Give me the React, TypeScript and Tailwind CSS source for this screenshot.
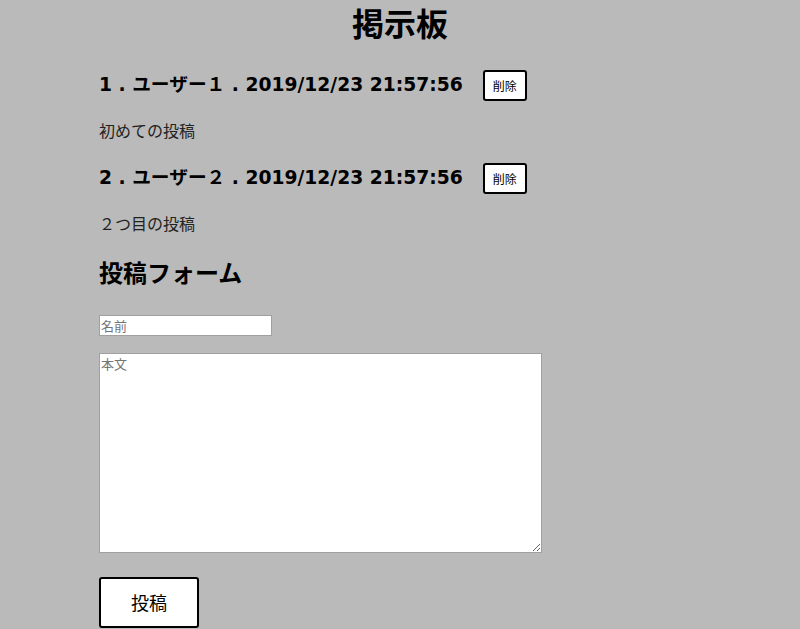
const posts = [
  { id: 1, name: "ユーザー１", date: "2019/12/23 21:57:56", body: "初めての投稿" },
  { id: 2, name: "ユーザー２", date: "2019/12/23 21:57:56", body: "２つ目の投稿" },
];

const font = { fontFamily: '"DejaVu Sans", "Noto Sans CJK JP", sans-serif' };

export default function App() {
  return (
    <div className="min-h-[629px] w-full bg-[#bababa] text-black" style={font}>
      <h1 className="pt-[1px] text-center text-[32px] font-bold leading-[42px] [font-family:'Noto_Sans_CJK_JP',sans-serif]">
        掲示板
      </h1>
      <div className="pl-[99px]">
        {posts.map((p, i) => (
          <div key={p.id} className={i === 0 ? "mt-[27px]" : "mt-[21px]"}>
            <div className="flex h-[31px] items-center gap-[20px]">
              <h3 className="text-[18.72px] font-bold">
                {p.id} . {p.name} . {p.date}
              </h3>
              <button className="h-[31px] w-[44px] rounded-[3px] border-2 border-black bg-white text-[12px] [font-family:'Noto_Sans_CJK_JP',sans-serif]">
                削除
              </button>
            </div>
            <p className="mt-[17px] h-[24px] text-[16px] leading-[24px] text-[#222] [font-family:'Noto_Sans_CJK_JP',sans-serif]">
              {p.body}
            </p>
          </div>
        ))}
        <h2 className="mt-[22px] h-[30px] text-[24px] font-bold leading-[30px] [font-family:'Noto_Sans_CJK_JP',sans-serif]">
          投稿フォーム
        </h2>
        <input
          placeholder="名前"
          className="mt-[28px] block h-[21px] w-[173px] border border-[#a0a0a0] bg-white px-[1px] text-[13px] placeholder:text-[#757575] [font-family:'Noto_Sans_CJK_JP',sans-serif]"
        />
        <textarea
          placeholder="本文"
          className="mt-[17px] block h-[200px] w-[443px] border border-[#a0a0a0] bg-white px-[1px] text-[13px] placeholder:text-[#757575] [font-family:'Noto_Sans_CJK_JP',sans-serif]"
        />
        <button className="mt-[24px] h-[51px] w-[100px] rounded-[3px] border-2 border-black bg-white text-[18px] [font-family:'Noto_Sans_CJK_JP',sans-serif]">
          投稿
        </button>
      </div>
    </div>
  );
}
